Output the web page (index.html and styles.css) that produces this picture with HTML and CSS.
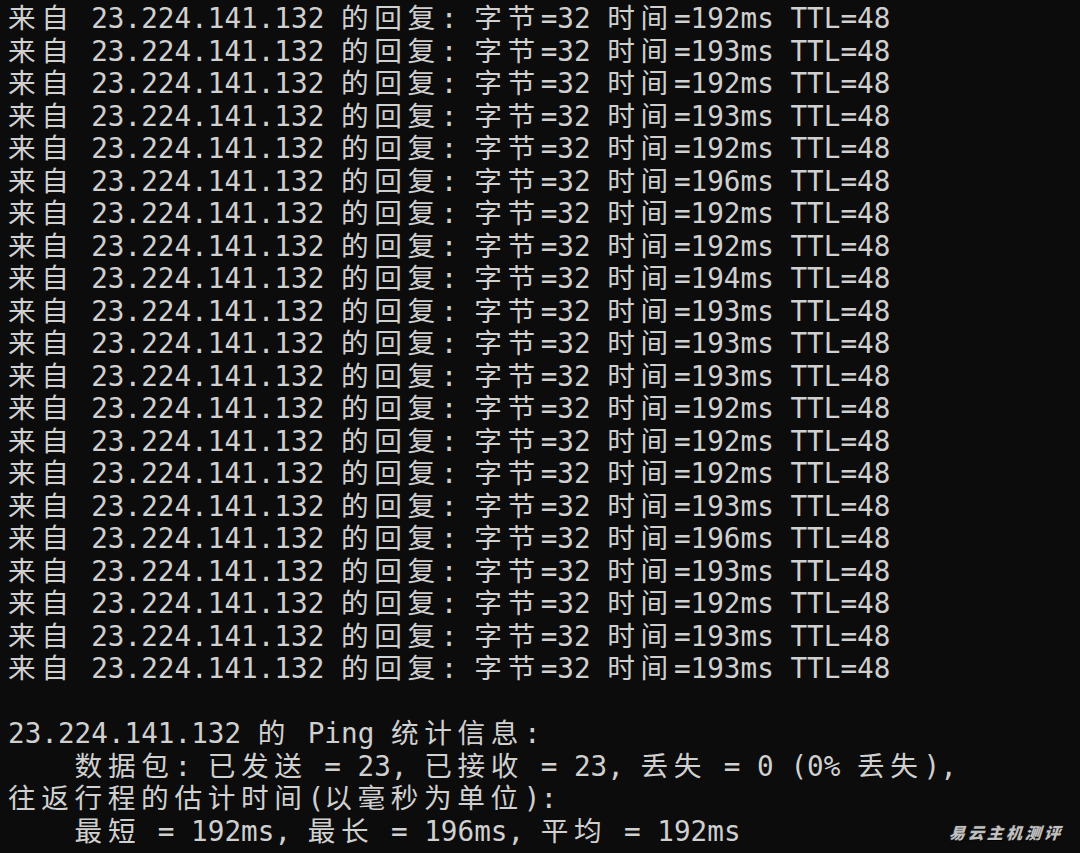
FILE: index.html
```html
<!DOCTYPE html>
<html lang="zh-CN">
<head>
<meta charset="utf-8">
<title>Ping</title>
<link rel="stylesheet" href="styles.css">
</head>
<body>
<main class="term">
<div class="ln"><span class="c">来自</span> 23.224.141.132 <span class="c">的回复</span>: <span class="c">字节</span>=32 <span class="c">时间</span>=192ms TTL=48</div>
<div class="ln"><span class="c">来自</span> 23.224.141.132 <span class="c">的回复</span>: <span class="c">字节</span>=32 <span class="c">时间</span>=193ms TTL=48</div>
<div class="ln"><span class="c">来自</span> 23.224.141.132 <span class="c">的回复</span>: <span class="c">字节</span>=32 <span class="c">时间</span>=192ms TTL=48</div>
<div class="ln"><span class="c">来自</span> 23.224.141.132 <span class="c">的回复</span>: <span class="c">字节</span>=32 <span class="c">时间</span>=193ms TTL=48</div>
<div class="ln"><span class="c">来自</span> 23.224.141.132 <span class="c">的回复</span>: <span class="c">字节</span>=32 <span class="c">时间</span>=192ms TTL=48</div>
<div class="ln"><span class="c">来自</span> 23.224.141.132 <span class="c">的回复</span>: <span class="c">字节</span>=32 <span class="c">时间</span>=196ms TTL=48</div>
<div class="ln"><span class="c">来自</span> 23.224.141.132 <span class="c">的回复</span>: <span class="c">字节</span>=32 <span class="c">时间</span>=192ms TTL=48</div>
<div class="ln"><span class="c">来自</span> 23.224.141.132 <span class="c">的回复</span>: <span class="c">字节</span>=32 <span class="c">时间</span>=192ms TTL=48</div>
<div class="ln"><span class="c">来自</span> 23.224.141.132 <span class="c">的回复</span>: <span class="c">字节</span>=32 <span class="c">时间</span>=194ms TTL=48</div>
<div class="ln"><span class="c">来自</span> 23.224.141.132 <span class="c">的回复</span>: <span class="c">字节</span>=32 <span class="c">时间</span>=193ms TTL=48</div>
<div class="ln"><span class="c">来自</span> 23.224.141.132 <span class="c">的回复</span>: <span class="c">字节</span>=32 <span class="c">时间</span>=193ms TTL=48</div>
<div class="ln"><span class="c">来自</span> 23.224.141.132 <span class="c">的回复</span>: <span class="c">字节</span>=32 <span class="c">时间</span>=193ms TTL=48</div>
<div class="ln"><span class="c">来自</span> 23.224.141.132 <span class="c">的回复</span>: <span class="c">字节</span>=32 <span class="c">时间</span>=192ms TTL=48</div>
<div class="ln"><span class="c">来自</span> 23.224.141.132 <span class="c">的回复</span>: <span class="c">字节</span>=32 <span class="c">时间</span>=192ms TTL=48</div>
<div class="ln"><span class="c">来自</span> 23.224.141.132 <span class="c">的回复</span>: <span class="c">字节</span>=32 <span class="c">时间</span>=192ms TTL=48</div>
<div class="ln"><span class="c">来自</span> 23.224.141.132 <span class="c">的回复</span>: <span class="c">字节</span>=32 <span class="c">时间</span>=193ms TTL=48</div>
<div class="ln"><span class="c">来自</span> 23.224.141.132 <span class="c">的回复</span>: <span class="c">字节</span>=32 <span class="c">时间</span>=196ms TTL=48</div>
<div class="ln"><span class="c">来自</span> 23.224.141.132 <span class="c">的回复</span>: <span class="c">字节</span>=32 <span class="c">时间</span>=193ms TTL=48</div>
<div class="ln"><span class="c">来自</span> 23.224.141.132 <span class="c">的回复</span>: <span class="c">字节</span>=32 <span class="c">时间</span>=192ms TTL=48</div>
<div class="ln"><span class="c">来自</span> 23.224.141.132 <span class="c">的回复</span>: <span class="c">字节</span>=32 <span class="c">时间</span>=193ms TTL=48</div>
<div class="ln"><span class="c">来自</span> 23.224.141.132 <span class="c">的回复</span>: <span class="c">字节</span>=32 <span class="c">时间</span>=193ms TTL=48</div>
<div class="ln"> </div>
<div class="ln">23.224.141.132 <span class="c">的</span> Ping <span class="c">统计信息</span>:</div>
<div class="ln">    <span class="c">数据包</span>: <span class="c">已发送</span> = 23, <span class="c">已接收</span> = 23, <span class="c">丢失</span> = 0 (0% <span class="c">丢失</span>),</div>
<div class="ln"><span class="c">往返行程的估计时间</span>(<span class="c">以毫秒为单位</span>):</div>
<div class="ln">    <span class="c">最短</span> = 192ms, <span class="c">最长</span> = 196ms, <span class="c">平均</span> = 192ms</div>
</main>
<div class="mark">易云主机测评</div>
</body>
</html>
```

FILE: styles.css
```css
html, body {
  margin: 0;
  padding: 0;
  background: #0c0c0c;
  width: 1080px;
  height: 853px;
  overflow: hidden;
}

.term {
  padding: 3px 8px 0 8px;
  font-family: "DejaVu Sans Mono", "Noto Sans CJK SC", monospace;
  font-size: 27.66px;
  color: #d0d0d0;
  display: grid;
  grid-auto-rows: 32.5px;
}

.ln {
  white-space: pre;
  line-height: 32.5px;
  height: 32.5px;
}

.c {
  letter-spacing: 5.62px;
}

.mark {
  position: absolute;
  right: 15px;
  bottom: 9px;
  font-family: "Noto Sans CJK SC", sans-serif;
  font-weight: 900;
  font-size: 16px;
  letter-spacing: 3px;
  color: #c0c0c0;
  transform: skewX(-18deg);
  text-shadow: 1px 1px 1px #000, 0 0 2px #444;
}
```
